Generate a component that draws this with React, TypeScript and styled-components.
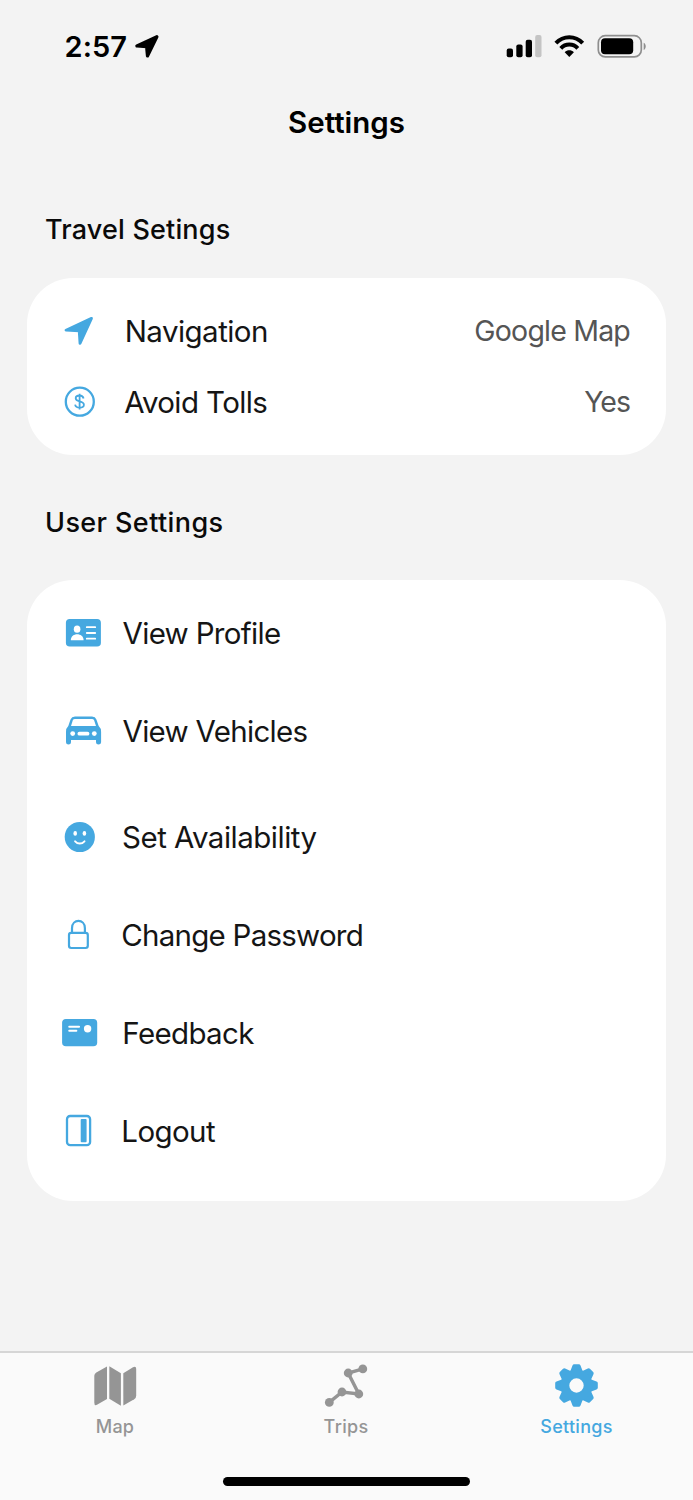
import React from 'react';
import styled, { createGlobalStyle } from 'styled-components';

const BLUE = '#45a8e0';
const GRAY = '#959595';

const GlobalStyle = createGlobalStyle`
  * { box-sizing: border-box; }
  body { margin: 0; background: #f3f3f3; font-family: Inter, "Liberation Sans", sans-serif; font-variant-ligatures: none; }
  svg { display: block; flex: none; }
`;

const Screen = styled.div`
  width: 693px;
  height: 1500px;
  display: flex;
  flex-direction: column;
  background: #f3f3f3;
  overflow: hidden;
`;

const StatusBar = styled.header`
  height: 92px;
  padding: 0 46px 0 64.5px;
  display: flex;
  justify-content: space-between;
  align-items: center;
`;

const Time = styled.div<{ $track: number }>`
  display: flex;
  align-items: center;
  gap: 7px;
  padding-top: 1px;
  font-size: 29px;
  line-height: 36px;
  font-weight: 600;
  letter-spacing: ${(p) => p.$track}px;
  color: #000;
`;

const Title = styled.h1<{ $track: number }>`
  margin: 12px 0 0;
  height: 36px;
  font-size: 29.5px;
  line-height: 36px;
  font-weight: 600;
  text-align: center;
  letter-spacing: ${(p) => p.$track}px;
  color: #000;
`;

const SectionTitle = styled.h2<{ $top: number; $track: number }>`
  margin: ${(p) => p.$top}px 0 0 45px;
  height: 36px;
  font-size: 27px;
  line-height: 36px;
  font-weight: 500;
  letter-spacing: ${(p) => p.$track}px;
  color: #0a0a0a;
`;

const Card = styled.section<{ $top: number; $height: number; $pad: number }>`
  margin: ${(p) => p.$top}px 27px 0;
  height: ${(p) => p.$height}px;
  padding: ${(p) => p.$pad}px 36px 0 33px;
  border-radius: 46px;
  background: #fff;
`;

const Row = styled.div<{ $height: number }>`
  display: flex;
  align-items: center;
  height: ${(p) => p.$height}px;
`;

const IconSlot = styled.div<{ $width: number }>`
  width: ${(p) => p.$width}px;
  flex: none;
`;

const Label = styled.span<{ $track: number }>`
  font-size: 29.5px;
  line-height: 38px;
  white-space: nowrap;
  letter-spacing: ${(p) => p.$track}px;
  color: #151515;
`;

const Value = styled.span<{ $track: number }>`
  margin-left: auto;
  font-size: 28.5px;
  line-height: 38px;
  white-space: nowrap;
  letter-spacing: ${(p) => p.$track}px;
  color: #555;
`;

const TabBar = styled.nav`
  margin-top: auto;
  height: 149px;
  display: flex;
  flex-direction: column;
  align-items: center;
  border-top: 2px solid #d6d6d6;
  background: #fafafa;
`;

const Tabs = styled.div`
  width: 693px;
  height: 124px;
  display: grid;
  grid-template-columns: 230px 232px 229px;
`;

const Tab = styled.div<{ $color: string; $track: number }>`
  display: flex;
  flex-direction: column;
  align-items: center;
  padding-top: 9px;
  gap: 7px;
  font-size: 18px;
  line-height: 24px;
  font-weight: 500;
  letter-spacing: ${(p) => p.$track}px;
  color: ${(p) => p.$color};
`;

const HomeIndicator = styled.div`
  width: 247px;
  height: 9px;
  border-radius: 5px;
  background: #000;
`;

const LocationArrow = () => (
  <svg width="26" height="26" viewBox="0 0.7 26 26" fill="currentColor" stroke="currentColor" strokeWidth="3.2" strokeLinejoin="round">
    <path d="M22.9 3.4 2.9 12.7 12.6 13.4 13.5 22.7Z" />
  </svg>
);

const StatusIcons = () => (
  <svg width="142" height="30" viewBox="505 31 142 30">
    <rect x="506.7" y="48.5" width="6.3" height="8.7" rx="2" />
    <rect x="516.3" y="44.4" width="6.3" height="12.8" rx="2" />
    <rect x="525.7" y="39.7" width="6.3" height="17.5" rx="2" />
    <rect x="535.2" y="35" width="6.3" height="22.2" rx="2" fill="#c4c4c4" />
    <g fill="none" stroke="#000" strokeWidth="4">
      <path d="M555.9 43.2C563.3 35.3 575.3 35.3 582.7 43.2" />
      <path d="M560.8 48.3C565.4 43.3 573.2 43.3 577.8 48.3" />
    </g>
    <path d="M564.7 52.2C567.4 49.6 571.2 49.6 573.9 52.2L569.3 57Z" />
    <rect x="598.3" y="35.7" width="43" height="21.2" rx="7" fill="none" stroke="#8e8e8e" strokeWidth="1.7" />
    <rect x="601" y="38.2" width="32.2" height="16" rx="4" />
    <path d="M643.7 42.8c2.7 1 2.7 6.2 0 7.2Z" fill="#8e8e8e" />
  </svg>
);

const NavigationIcon = () => (
  <svg width="36" height="36" viewBox="60 313 36 36">
    <path d="M91.5 318.3 66 330.2 79.2 330.8 80 343.4Z" fill={BLUE} stroke={BLUE} strokeWidth="2.8" strokeLinejoin="round" />
  </svg>
);

const TollIcon = () => (
  <svg width="36" height="36" viewBox="60 384 36 36" fill="none" stroke={BLUE}>
    <circle cx="79.8" cy="401.7" r="14" strokeWidth="2.3" />
    <path d="M79.6 393.7V409.4M83.6 398.4C83 396.2 81.6 395.5 79.6 395.5 77.2 395.5 75.7 396.7 75.7 398.3 75.7 400.1 77 400.8 79.6 401.4 82.5 402.1 83.9 403 83.9 404.7 83.9 406.5 82.2 407.6 79.7 407.6 77.2 407.6 75.5 406.6 75.1 404.6" strokeWidth="1.8" />
  </svg>
);

const ProfileIcon = () => (
  <svg width="42" height="36" viewBox="60 615 42 36">
    <rect x="65.9" y="619" width="35" height="27.6" rx="3.8" fill={BLUE} />
    <ellipse cx="77.1" cy="629.2" rx="3.3" ry="3.6" fill="#fff" />
    <path d="M70.8 640.2c0-8 12.8-8 12.8 0Z" fill="#fff" />
    <path d="M86.8 627.2h8.4M86.8 633h8.4M86.8 638.7h8.4" stroke="#fff" strokeWidth="1.8" strokeLinecap="round" />
  </svg>
);

const CarIcon = () => (
  <svg width="42" height="36" viewBox="60 713 42 36">
    <path fillRule="evenodd" fill={BLUE} d="M75 716.6H92Q95.4 716.8 96.4 719.5L98.7 726Q101.1 728 101.1 732V742.3Q101 744.5 98.5 744.5 96 744.5 96 742.3V740H71V742.3Q71 744.5 68.5 744.5 66 744.5 66 742.3V732Q66 728 68.3 726L70.5 719.5Q71.7 716.8 75 716.6ZM75 718.9Q73.3 718.9 72.8 720.3L71 726H96L94.1 720.3Q93.5 718.9 92 718.9Z" />
    <g fill="#fff">
      <circle cx="72.7" cy="733.6" r="2.4" />
      <circle cx="94.3" cy="733.6" r="2.4" />
      <rect x="77.5" y="731.7" width="11.9" height="3.9" rx="1.9" />
    </g>
  </svg>
);

const SmileIcon = () => (
  <svg width="36" height="36" viewBox="60 819 36 36">
    <circle cx="79.8" cy="837" r="15.1" fill={BLUE} />
    <ellipse cx="75.2" cy="833.4" rx="1.8" ry="2.3" fill="#fff" />
    <ellipse cx="84.4" cy="833.4" rx="1.8" ry="2.3" fill="#fff" />
    <path d="M75.1 841.3C77.8 844.3 81.8 844.3 84.5 841.3" fill="none" stroke="#fff" strokeWidth="1.9" strokeLinecap="round" />
  </svg>
);

const LockIcon = () => (
  <svg width="36" height="36" viewBox="60 917 36 36" fill="none" stroke={BLUE} strokeWidth="2.2">
    <rect x="69" y="932.8" width="18.8" height="15.2" rx="2.2" />
    <path d="M72 932.8V928.2C72 918.5 84.9 918.5 84.9 928.2V932.8" />
  </svg>
);

const FeedbackIcon = () => (
  <svg width="40" height="36" viewBox="60 1015 40 36">
    <rect x="62.1" y="1019" width="35.1" height="27.3" rx="3.8" fill={BLUE} />
    <path d="M69.2 1026.8h9.9M69.2 1030.8h7.2" stroke="#fff" strokeWidth="1.9" strokeLinecap="round" />
    <circle cx="87.6" cy="1028.8" r="3.7" fill="#fff" />
  </svg>
);

const LogoutIcon = () => (
  <svg width="36" height="36" viewBox="60 1112.7 36 36">
    <rect x="67" y="1115.7" width="23.1" height="29.2" rx="3.2" fill="none" stroke={BLUE} strokeWidth="2.3" />
    <rect x="80.7" y="1118.8" width="5.9" height="23.2" rx="1" fill={BLUE} />
  </svg>
);

const MapIcon = () => (
  <svg width="46" height="46" viewBox="92 1362 46 46" fill={GRAY}>
    <path d="M107 1366.5V1398.9L97 1404.8Q94.3 1406.2 94.3 1402.5V1375.8Q94.3 1373.5 96.3 1372.4Z" />
    <path d="M109.3 1366.3 120.9 1373.2V1405.7L109.3 1398.8Z" />
    <path d="M123.3 1373.2 133 1367.2Q136.2 1365.7 136.2 1369V1395.5Q136.2 1398 134.2 1399.2L123.3 1405.5Z" />
  </svg>
);

const TripsIcon = () => (
  <svg width="46" height="46" viewBox="323 1362 46 46" fill={GRAY}>
    <path d="M329.3 1402.4 342 1392 358.8 1394 348.2 1373 362.8 1368.9" fill="none" stroke={GRAY} strokeWidth="3.4" />
    <circle cx="329.3" cy="1402.4" r="4.4" />
    <circle cx="342" cy="1392" r="4.4" />
    <circle cx="358.8" cy="1394" r="4.4" />
    <circle cx="348.2" cy="1373" r="4.4" />
    <circle cx="362.8" cy="1368.9" r="4.4" />
  </svg>
);

const TOOTH = 'M-6.3-14-4-20Q-3.6-21.3-2.3-21.3H2.3Q3.6-21.3 4-20L6.3-14Z';

const GearIcon = () => (
  <svg width="46" height="46" viewBox="-22.5 -23.5 46 46" fill={BLUE}>
    {[0, 45, 90, 135, 180, 225, 270, 315].map((a) => (
      <path key={a} d={TOOTH} transform={`rotate(${a})`} />
    ))}
    <circle r="11.6" fill="none" stroke={BLUE} strokeWidth="8.8" />
  </svg>
);

const userRows = [
  { label: 'View Profile', icon: <ProfileIcon />, height: 98, slot: 62.5, track: -0.68 },
  { label: 'View Vehicles', icon: <CarIcon />, height: 98, slot: 62.5, track: -0.7 },
  { label: 'Set Availability', icon: <SmileIcon />, height: 114, slot: 62, track: -0.5 },
  { label: 'Change Password', icon: <LockIcon />, height: 82, slot: 61.3, track: -0.76 },
  { label: 'Feedback', icon: <FeedbackIcon />, height: 113, slot: 62.3, track: -0.65 },
  { label: 'Logout', icon: <LogoutIcon />, height: 83, slot: 61.3, track: -0.6 },
];

export default function App() {
  return (
    <Screen>
      <GlobalStyle />
      <StatusBar>
        <Time $track={0.1}>2:57<LocationArrow /></Time>
        <StatusIcons />
      </StatusBar>
      <Title $track={0}>Settings</Title>
      <SectionTitle $top={72} $track={0.17}>Travel Setings</SectionTitle>
      <Card $top={30} $height={177} $pad={17}>
        <Row $height={71}>
          <IconSlot $width={64.7}><NavigationIcon /></IconSlot>
          <Label $track={-0.55}>Navigation</Label>
          <Value $track={-0.8}>Google Map</Value>
        </Row>
        <Row $height={71}>
          <IconSlot $width={64.2}><TollIcon /></IconSlot>
          <Label $track={-0.62}>Avoid Tolls</Label>
          <Value $track={-1}>Yes</Value>
        </Row>
      </Card>
      <SectionTitle $top={50} $track={0.4}>User Settings</SectionTitle>
      <Card $top={39} $height={621} $pad={4}>
        {userRows.map((r) => (
          <Row key={r.label} $height={r.height}>
            <IconSlot $width={r.slot}>{r.icon}</IconSlot>
            <Label $track={r.track}>{r.label}</Label>
          </Row>
        ))}
      </Card>
      <TabBar>
        <Tabs>
          <Tab $color={GRAY} $track={0.2}><MapIcon />Map</Tab>
          <Tab $color={GRAY} $track={0.3}><TripsIcon />Trips</Tab>
          <Tab $color={BLUE} $track={0.3}><GearIcon />Settings</Tab>
        </Tabs>
        <HomeIndicator />
      </TabBar>
    </Screen>
  );
}
